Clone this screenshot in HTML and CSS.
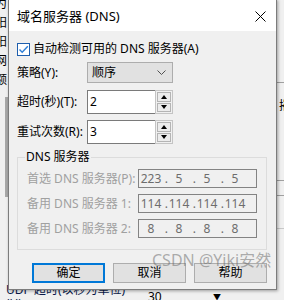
FILE: index.html
```html
<!DOCTYPE html>
<html lang="zh-CN">
<head>
<meta charset="utf-8">
<title>域名服务器 (DNS)</title>
<link rel="stylesheet" href="styles.css">
</head>
<body>
<div class="desk">
  <div class="bg-left">
    <div class="bl">为</div>
    <div class="bl">阳</div>
    <div class="bl">阳</div>
    <div class="bl">网</div>
    <div class="bl">额</div>
  </div>
  <div class="bg-bar"></div>
  <div class="bg-right">
    <div class="br-line br-1"></div>
    <div class="br-char">摧</div>
    <div class="br-line br-2"></div>
    <div class="br-line br-3"></div>
    <div class="br-line br-4"></div>
  </div>
  <div class="bg-bottom">
    <span class="bb-label">UDP 超时(以秒为单位)(U):</span>
    <span class="bb-field">30</span>
    <span class="bb-spin">▼</span>
  </div>
</div>

<div class="dialog">
  <div class="titlebar">
    <span class="title">域名服务器 (DNS)</span>
    <svg class="close" width="11" height="11" viewBox="0 0 11 11"><path d="M0.5 0.5 L10.5 10.5 M10.5 0.5 L0.5 10.5" stroke="#000" stroke-width="1" fill="none"/></svg>
  </div>
  <div class="content">
    <div class="check-row">
      <span class="cb"><svg width="11" height="11" viewBox="0 0 11 11"><path d="M1.5 5.5 L4.2 8.3 L9.8 2.2" stroke="#2f7fd6" stroke-width="1.4" fill="none"/></svg></span>
      <span>自动检测可用的 DNS 服务器(A)</span>
    </div>
    <div class="row row-select">
      <span class="lab">策略(Y):</span>
      <div class="select">
        <span>顺序</span>
        <svg width="9" height="5" viewBox="0 0 9 5"><path d="M0.5 0.5 L4.5 4.5 L8.5 0.5" stroke="#505050" stroke-width="1" fill="none"/></svg>
      </div>
    </div>
    <div class="row row-spin">
      <span class="lab">超时(秒)(T):</span>
      <div class="spin">
        <div class="spin-field">2</div>
        <div class="spin-btns">
          <div class="sb"><span class="tri-up"></span></div>
          <div class="sb"><span class="tri-down"></span></div>
        </div>
      </div>
    </div>
    <div class="row row-spin">
      <span class="lab">重试次数(R):</span>
      <div class="spin">
        <div class="spin-field">3</div>
        <div class="spin-btns">
          <div class="sb"><span class="tri-up"></span></div>
          <div class="sb"><span class="tri-down"></span></div>
        </div>
      </div>
    </div>
    <div class="group">
      <span class="group-title">DNS 服务器</span>
      <div class="iprow">
        <span class="iplab">首选 DNS 服务器(P):</span>
        <div class="ip"><span class="seg">223</span><span class="dot">.</span><span class="seg">5</span><span class="dot">.</span><span class="seg">5</span><span class="dot">.</span><span class="seg">5</span></div>
      </div>
      <div class="iprow">
        <span class="iplab">备用 DNS 服务器 1:</span>
        <div class="ip"><span class="seg">114</span><span class="dot">.</span><span class="seg">114</span><span class="dot">.</span><span class="seg">114</span><span class="dot">.</span><span class="seg">114</span></div>
      </div>
      <div class="iprow">
        <span class="iplab">备用 DNS 服务器 2:</span>
        <div class="ip"><span class="seg">8</span><span class="dot">.</span><span class="seg">8</span><span class="dot">.</span><span class="seg">8</span><span class="dot">.</span><span class="seg">8</span></div>
      </div>
    </div>
    <div class="buttons">
      <div class="btn btn-default">确定</div>
      <div class="btn">取消</div>
      <div class="btn">帮助</div>
    </div>
  </div>
</div>

<div class="watermark">CSDN @Yiki安然</div>
</body>
</html>
```

FILE: styles.css
```css
* { box-sizing: border-box; }
html, body { margin: 0; padding: 0; }
body {
  width: 284px;
  height: 300px;
  overflow: hidden;
  position: relative;
  background: #f0f0f0;
  font-family: "Noto Sans", "Noto Sans CJK SC", sans-serif;
  font-size: 12px;
  color: #000;
}

/* background window fragments */
.desk { position: absolute; inset: 0; }
.bg-left {
  position: absolute;
  left: -5px;
  top: -6px;
  display: flex;
  flex-direction: column;
}
.bl { height: 19px; line-height: 19px; font-size: 12px; }
.bg-bar {
  position: absolute;
  left: 5px;
  top: 97px;
  width: 3px;
  height: 100px;
  background: #a8a8a8;
}
.bg-right {
  position: absolute;
  left: 277px;
  top: 0;
  width: 7px;
  height: 300px;
}
.br-line { position: absolute; left: 0; right: 0; height: 1px; background: #a0a0a0; }
.br-1 { top: 82px; }
.br-2 { top: 180px; }
.br-3 { top: 195px; }
.br-4 { top: 228px; background: #c8c8c8; }
.br-char { position: absolute; left: 2px; top: 98px; font-size: 12px; line-height: 16px; }
.bg-bottom {
  position: absolute;
  left: 6px;
  top: 290px;
  display: flex;
  align-items: center;
  height: 14px;
  font-size: 12px;
  line-height: 14px;
  color: #0a1a4a;
}
.bb-label { width: 137px; }
.bb-field { width: 70px; padding-left: 5px; color: #000; }
.bb-spin { font-size: 8px; color: #000; }

/* dialog */
.dialog {
  position: absolute;
  left: 8px;
  top: -1px;
  width: 269px;
  height: 291px;
  background: #f0f0f0;
  border: 1px solid #7c7c7c;
  box-shadow: 1px 1px 3px rgba(0,0,0,0.35);
  display: flex;
  flex-direction: column;
}
.titlebar {
  height: 31px;
  background: #fff;
  display: flex;
  align-items: center;
  justify-content: space-between;
  padding: 1px 10px 0 8px;
}
.title { font-size: 13px; line-height: 16px; }
.close { display: block; }

.content {
  padding: 10px 9px 0 8px;
  display: flex;
  flex-direction: column;
}
.check-row {
  height: 16px;
  display: flex;
  align-items: center;
  gap: 3px;
  line-height: 16px;
}
.cb {
  width: 13px;
  height: 13px;
  border: 1px solid #1f5fae;
  background: #fff;
  display: flex;
  align-items: center;
  justify-content: center;
}
.cb svg { display: block; }

.row { display: flex; align-items: center; }
.lab { width: 70px; line-height: 16px; }
.row-select { margin-top: 5px; height: 21px; }
.select {
  width: 86px;
  height: 21px;
  border: 1px solid #adadad;
  background: #e1e1e1;
  display: flex;
  align-items: center;
  justify-content: space-between;
  padding: 0 6px 0 4px;
  line-height: 16px;
}
.select svg { display: block; }

.row-spin { margin-top: 7px; height: 24px; }
.row-spin + .row-spin { margin-top: 6px; }
.spin { display: flex; width: 86px; height: 24px; }
.spin-field {
  flex: 1;
  height: 24px;
  background: #fff;
  border: 1px solid #7a7a7a;
  border-right: none;
  padding: 0 2px;
  line-height: 22px;
}
.spin-btns {
  width: 18px;
  height: 24px;
  border: 1px solid #c4c4c4;
  background: #f0f0f0;
  padding: 1px;
  display: flex;
  flex-direction: column;
  gap: 1px;
}
.sb {
  flex: 1;
  border: 1px solid #b4b4b4;
  background: #ececec;
  display: flex;
  align-items: center;
  justify-content: center;
}
.tri-up, .tri-down { width: 0; height: 0; border-left: 3.5px solid transparent; border-right: 3.5px solid transparent; }
.tri-up { border-bottom: 4px solid #000; }
.tri-down { border-top: 4px solid #000; }

.group {
  margin-top: 13px;
  padding: 0 9px 11px 9px;
  border: 1px solid #dcdcdc;
  display: flex;
  flex-direction: column;
}
.group-title {
  align-self: flex-start;
  margin: -7px 0 0 -2px;
  padding: 0 1px;
  background: #f0f0f0;
  line-height: 12px;
  height: 12px;
}
.iprow { display: flex; align-items: center; justify-content: space-between; height: 19px; margin-top: 6px; }
.iprow + .iprow { margin-top: 6px; }
.iplab { color: #a0a0a0; line-height: 16px; }
.ip {
  width: 119px;
  height: 19px;
  border: 1px solid #838383;
  background: #f0f0f0;
  display: flex;
  align-items: center;
  padding-left: 1px;
  color: #6d6d6d;
  line-height: 16px;
}
.seg { width: 22px; text-align: center; }
.dot { width: 6px; text-align: right; }

.buttons {
  margin-top: 13px;
  display: flex;
  justify-content: flex-end;
  gap: 8px;
}
.btn {
  width: 73px;
  height: 20px;
  border: 1px solid #adadad;
  background: #e1e1e1;
  display: flex;
  align-items: center;
  justify-content: center;
  line-height: 16px;
}
.btn-default { border: 2px solid #0078d7; }

.watermark {
  position: absolute;
  left: 152px;
  top: 250px;
  font-family: "Noto Sans", "Noto Sans CJK SC", sans-serif;
  font-size: 16px;
  line-height: 20px;
  color: rgba(110, 110, 110, 0.55);
  letter-spacing: 0;
  white-space: nowrap;
}
```
